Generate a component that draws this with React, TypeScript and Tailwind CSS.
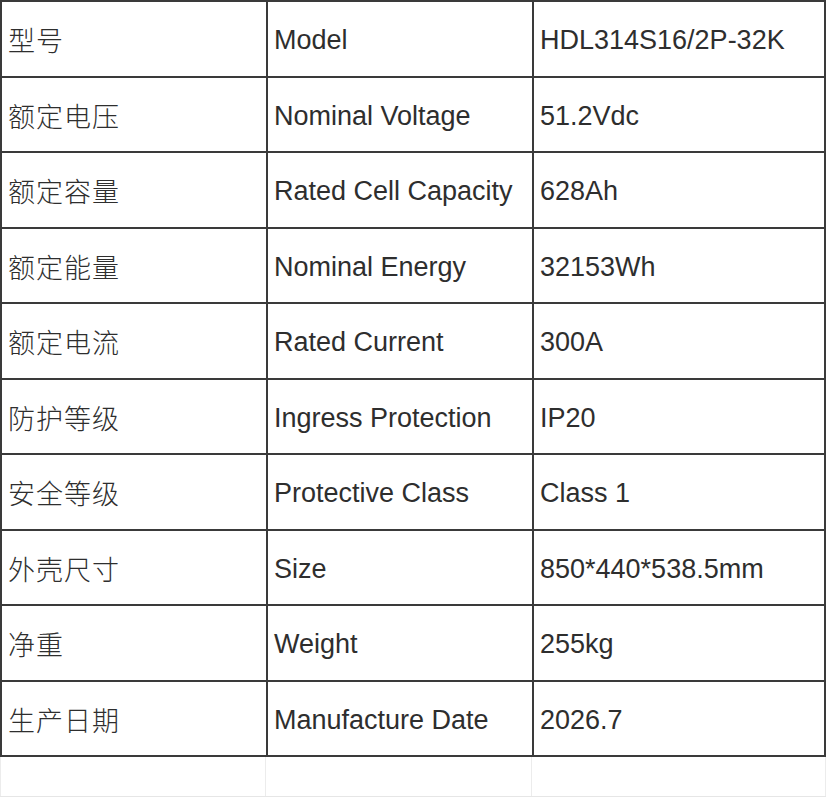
const rows: [string, string, string][] = [
  ['型号', 'Model', 'HDL314S16/2P-32K'],
  ['额定电压', 'Nominal Voltage', '51.2Vdc'],
  ['额定容量', 'Rated Cell Capacity', '628Ah'],
  ['额定能量', 'Nominal Energy', '32153Wh'],
  ['额定电流', 'Rated Current', '300A'],
  ['防护等级', 'Ingress Protection', 'IP20'],
  ['安全等级', 'Protective Class', 'Class 1'],
  ['外壳尺寸', 'Size', '850*440*538.5mm'],
  ['净重', 'Weight', '255kg'],
  ['生产日期', 'Manufacture Date', '2026.7'],
]

const font = "font-['Liberation_Sans','Noto_Sans_CJK_SC',sans-serif]"

export default function App() {
  return (
    <div className={`w-[828px] h-[800px] bg-white text-[#2e2e2e] text-[27px] ${font}`}>
      <div className="w-[826px] grid grid-cols-[264px_264px_290px] gap-[2px] bg-[#3a3a3a] border-2 border-[#3a3a3a]">
        {rows.map(([zh, en, val]) => (
          <div key={zh} className="contents">
            <div className="h-[73.5px] bg-white flex items-center pl-[6px] pt-[3px] font-['Noto_Sans_CJK_SC',sans-serif] font-light tracking-[1px]">
              {zh}
            </div>
            <div className="h-[73.5px] bg-white flex items-center pl-[6px] pt-[3px]">{en}</div>
            <div className="h-[73.5px] bg-white flex items-center pl-[6px] pt-[3px]">{val}</div>
          </div>
        ))}
      </div>
      <div className="w-[826px] h-[40px] grid grid-cols-[266px_266px_294px] border-b border-[#e6e6e6]">
        <div className="border-l border-r border-[#ececec]" />
        <div className="border-r border-[#ececec]" />
        <div className="border-r border-[#ececec]" />
      </div>
    </div>
  )
}
